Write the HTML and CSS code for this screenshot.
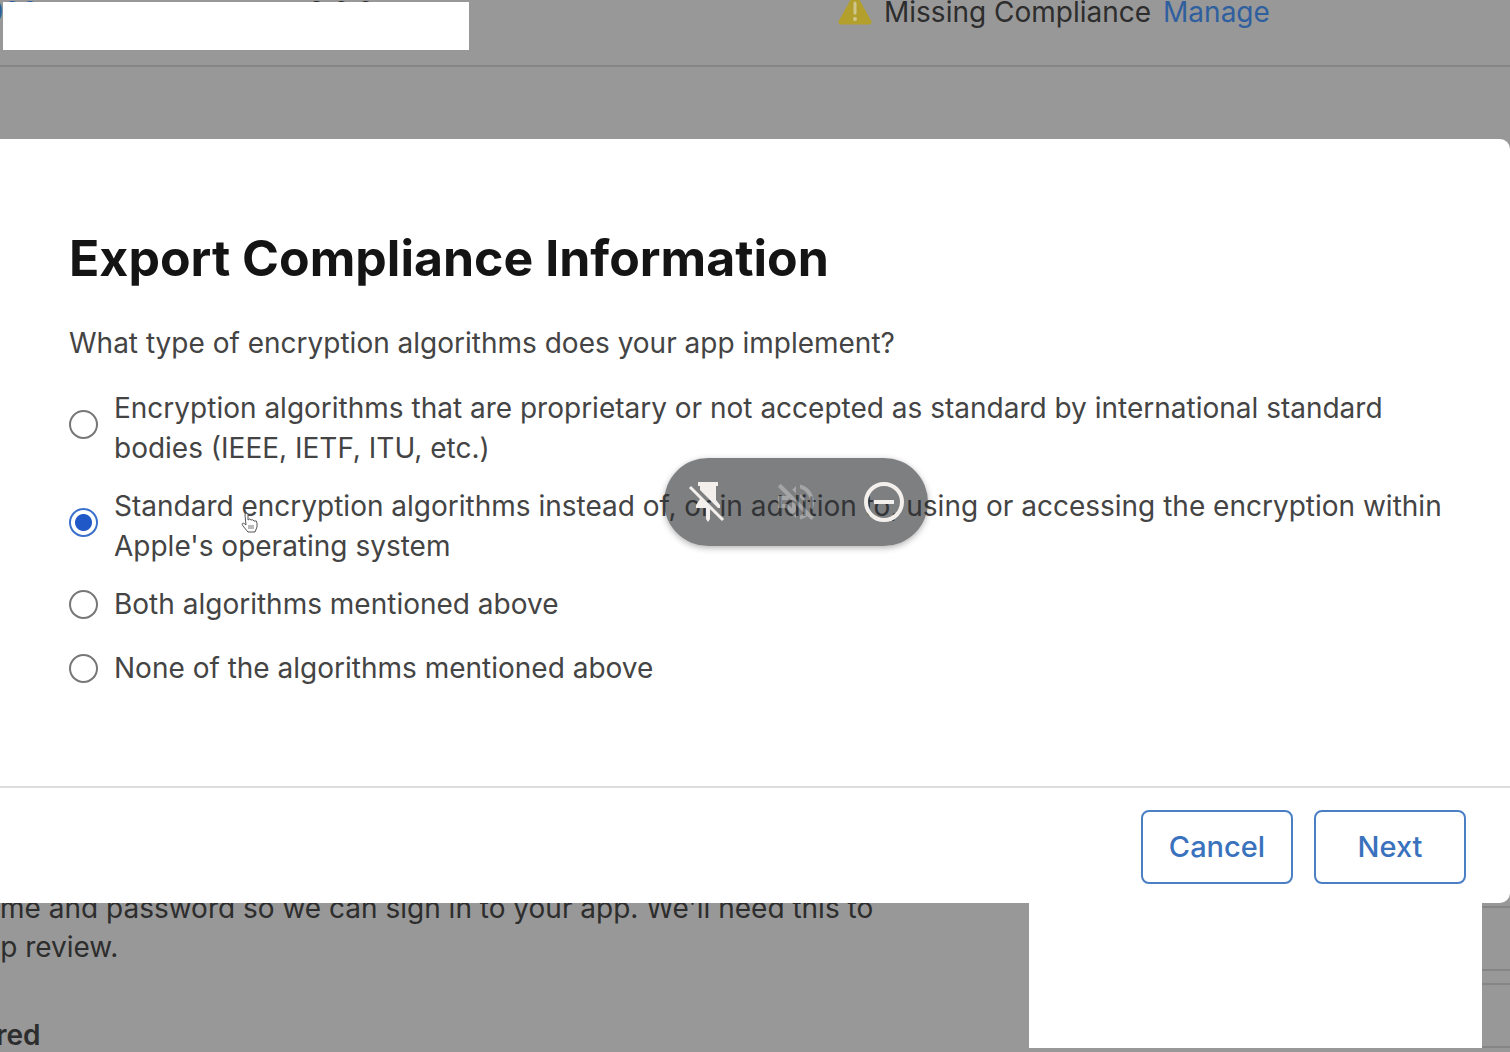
FILE: index.html
```html
<!DOCTYPE html>
<html lang="en">
<head>
<meta charset="utf-8">
<title>Export Compliance Information</title>
<link rel="stylesheet" href="styles.css">
</head>
<body>
<header class="build-row">
  <a class="build-number" href="#">900</a>
  <span class="build-version">2.0.0</span>
  <div class="build-status">
    <svg class="warning-icon" viewBox="0 0 34 32" aria-hidden="true">
      <path d="M17 3 31 28H3Z" fill="#b39f2c" stroke="#b39f2c" stroke-width="5" stroke-linejoin="round"/>
      <path d="M17 9v10" stroke="#cfc68f" stroke-width="3" stroke-linecap="round"/>
      <circle cx="17" cy="25" r="2" fill="#cfc68f"/>
    </svg>
    <span>Missing Compliance</span>
    <a class="manage" href="#">Manage</a>
  </div>
  <div class="cover cover-top"></div>
</header>

<main class="dialog" role="dialog" aria-labelledby="title">
  <form>
    <div class="dialog-body">
      <h1 id="title">Export Compliance Information</h1>
      <fieldset>
        <legend>What type of encryption algorithms does your app implement?</legend>
        <label class="option option-long"><input type="radio" name="type"><span>Encryption algorithms that are proprietary or not accepted as standard by international standard bodies (IEEE, IETF, ITU, etc.)</span></label>
        <label class="option option-long"><input type="radio" name="type" checked><span>Standard encryption algorithms instead of, or in addition to, using or accessing the encryption within Apple's operating system</span></label>
        <label class="option"><input type="radio" name="type"><span>Both algorithms mentioned above</span></label>
        <label class="option"><input type="radio" name="type"><span>None of the algorithms mentioned above</span></label>
      </fieldset>
    </div>
    <div class="dialog-footer">
      <button type="button">Cancel</button>
      <button type="button">Next</button>
    </div>
  </form>
  <svg class="pointer" viewBox="0 0 18 20" aria-hidden="true">
    <path d="M4 2C4 0 7 0 7 2V7Q9 5 10 7 12 6 13 8 16 7 16 10V14L14 19H7L2 13C0 10 2 9 5 12Z" fill="#fff" stroke="#555" stroke-width="1"/>
    <path d="M8 12v4M10 12v4M12 12v4" stroke="#777" fill="none"/>
  </svg>
  <div class="toolbar">
    <button type="button" aria-label="Unpin">
      <svg viewBox="0 0 48 48"><path d="M14 4H34V8H32V22L36 27V30H34L16 12V8H14ZM16 20V21L12 27V30H22V41L24 44 26 41V30Z" fill="#f3efec"/><path d="M6 9 39 42" stroke="#f3efec" stroke-width="3"/></svg>
    </button>
    <button type="button" aria-label="Unmute" disabled>
      <svg viewBox="0 0 24 24"><path fill="#fff" fill-opacity="0.3" d="M4.340 2.930L2.930 4.340 7.290 8.700 7 9H3v6h4l5 5v-6.590l4.180 4.180c-.65.49-1.380.88-2.180 1.110v2.060c1.340-.3 2.570-.92 3.610-1.750l2.050 2.050 1.410-1.410L4.340 2.930zM10 15.170L7.830 13H5v-2h2.830l.88-.88L10 11.410v3.760zM19 12c0 .82-.15 1.610-.41 2.340l1.530 1.530c.56-1.170.88-2.480.88-3.870 0-4.280-2.990-7.860-7-8.770v2.060c2.890.86 5 3.540 5 6.710zm-7-8l-1.880 1.880L12 7.760zm4.500 8c0-1.770-1.020-3.290-2.500-4.030v1.790l2.480 2.480c.01-.08.02-.16.02-.24z"/></svg>
    </button>
    <button type="button" aria-label="Hide">
      <svg viewBox="0 0 48 48"><circle cx="24" cy="24" r="18" fill="none" stroke="#f3efec" stroke-width="4"/><path d="M14 24H34" stroke="#f3efec" stroke-width="4"/></svg>
    </button>
  </div>
</main>

<section class="review">
  <div class="review-text">
    <p>me and password so we can sign in to your app. We'll need this to</p>
    <p class="cut-word">pp review.</p>
    <h2>red</h2>
  </div>
  <div class="review-fields">
    <input type="text" aria-label="User name">
    <input type="text" aria-label="Password">
  </div>
  <div class="cover cover-bottom"></div>
</section>
</body>
</html>
```
FILE: styles.css
```css
* { box-sizing: border-box; }

body {
  margin: 0;
  min-height: 100vh;
  overflow: hidden;
  background: #989898;
  color: #2d2d2d;
  font: 28px/40px Inter, "Liberation Sans", sans-serif;
}

a { color: #2f5f9f; text-decoration: none; }

.build-row {
  position: relative;
  display: grid;
  grid-template-columns: 308px 530px 1fr;
  height: 67px;
  border-bottom: 2px solid #858585;
  line-height: 24px;
}

.build-number { margin-left: -14px; }

.build-status { display: flex; gap: 12px; }

.warning-icon { width: 34px; height: 32px; margin-top: -6px; }

.cover { position: absolute; background: #fff; }

.cover-top { left: 3px; top: 2px; width: 466px; height: 48px; }

.dialog {
  position: relative;
  z-index: 1;
  margin-top: 72px;
  background: #fff;
  border-radius: 0 10px 10px 0;
  color: #444;
}

.dialog-body { padding: 88px 55px 80px 69px; }

h1 {
  margin: 0 0 34px;
  color: #141414;
  font-size: 50px;
  line-height: 62px;
  font-weight: 700;
}

fieldset { margin: 0; padding: 0; border: 0; }

legend { padding: 0; margin-bottom: 25px; }

.option {
  display: flex;
  align-items: center;
  gap: 16px;
  margin-bottom: 18px;
}

.option:last-child { margin-top: 24px; }

.option input {
  appearance: none;
  flex: none;
  width: 29px;
  height: 29px;
  margin: 0;
  border: 2px solid #777;
  border-radius: 50%;
}

.option-long input { margin-bottom: 8px; }

.option input:checked {
  border-color: #3a70cc;
  background: radial-gradient(circle, #2058c7 8px, #fff 9px);
}

.dialog-footer {
  display: flex;
  justify-content: flex-end;
  gap: 21px;
  padding: 22px 44px 19px;
  border-top: 2px solid #ddd;
}

.dialog-footer button {
  width: 152px;
  height: 74px;
  border: 2px solid #4a7fc4;
  border-radius: 8px;
  background: #fff;
  color: #3a72bd;
  font: 500 29px/40px Inter, "Liberation Sans", sans-serif;
}

.pointer { position: absolute; left: 241px; top: 374px; width: 18px; height: 20px; }

.toolbar {
  position: absolute;
  left: 664px;
  top: 319px;
  display: flex;
  border-radius: 44px;
  background: rgba(40, 42, 45, 0.6);
  box-shadow: 0 2px 6px rgba(0, 0, 0, 0.3);
}

.toolbar button {
  width: 88px;
  height: 88px;
  padding: 20px;
  border: 0;
  background: none;
}

.toolbar svg { display: block; width: 48px; height: 48px; }

.review {
  position: relative;
  display: flex;
  justify-content: space-between;
  margin-top: -14px;
}

.review p, .review h2 { margin: 0; font-size: 28px; line-height: 39px; }

.review h2 { margin: 49px 0 0 -4px; font-weight: 600; }

.cut-word { text-indent: -17px; }

.review-fields {
  display: grid;
  gap: 12px;
  padding-top: 17px;
  align-content: start;
}

.review-fields input {
  width: 440px;
  height: 65px;
  border: 2px solid #858585;
  border-right: 0;
  background: none;
}

.cover-bottom { right: 28px; top: 14px; width: 453px; height: 145px; }
```
